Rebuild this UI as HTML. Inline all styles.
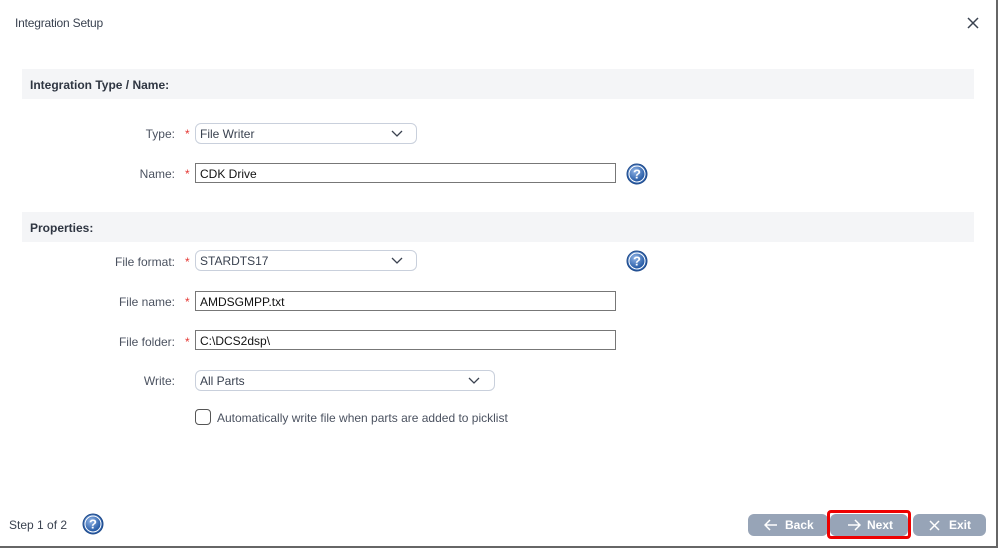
<!DOCTYPE html>
<html><head><meta charset="utf-8"><style>
*{box-sizing:border-box;margin:0;padding:0}
body{width:999px;height:549px;background:#fff;font-family:"Liberation Sans",sans-serif;color:#3a4250;position:relative;overflow:hidden;font-size:12px}
.frame{position:absolute;left:0;top:0;width:998px;height:548px;border-right:2px solid #666;border-bottom:2px solid #666}
.abs{position:absolute}
.title{left:15px;top:16px;font-size:12px;color:#3a4250;letter-spacing:-0.2px}
.sec{left:22px;width:952px;height:30px;background:#f4f5f7;font-weight:bold;font-size:12px;padding:9px 0 0 8px;color:#2f3642}
.lbl{text-align:right;width:150px;left:25px;font-size:12px;color:#4b5260}
.star{color:#e53935;font-size:12px}
.sel{border:1px solid #c9d0dc;border-radius:6px;height:21px;padding:3px 0 0 4px;font-size:12px;color:#3a4250;background:#fff}
.inp{border:1px solid #777;height:20px;padding:3px 0 0 4px;font-size:12px;color:#111;background:#fff}
.chev{position:absolute;top:6px}
.btn{top:514px;height:22px;background:#97a4b7;border-radius:6px;color:#fff;font-size:12px;font-weight:bold}
.btn span{position:absolute;top:4px}
</style></head><body>
<div class="frame"></div>
<div class="abs title">Integration Setup</div>
<svg class="abs" style="left:966px;top:16px" width="14" height="14"><path d="M2 2L12 12M12 2L2 12" stroke="#3a4250" stroke-width="1.5"/></svg>

<div class="abs sec" style="top:69px">Integration Type / Name:</div>
<div class="abs lbl" style="top:127px">Type:</div><div class="abs star" style="left:185px;top:127px">*</div>
<div class="abs sel" style="left:195px;top:123px;width:222px">File Writer<svg class="chev" style="left:195px" width="12" height="8"><path d="M1 1L6 6L11 1" stroke="#3a4250" stroke-width="1.3" fill="none"/></svg></div>
<div class="abs lbl" style="top:167px">Name:</div><div class="abs star" style="left:185px;top:167px">*</div>
<div class="abs inp" style="left:195px;top:163px;width:421px">CDK Drive</div>
<svg class="abs" style="left:626px;top:163px" width="22" height="22"><defs><radialGradient id="g" cx="40%" cy="35%"><stop offset="0" stop-color="#8fb3e6"/><stop offset="1" stop-color="#2a5ea8"/></radialGradient></defs><circle cx="11" cy="11" r="10" fill="url(#g)" stroke="#1f4a8a"/><circle cx="11" cy="11" r="8" fill="none" stroke="#fff" stroke-width="1"/><text x="11" y="15.5" text-anchor="middle" font-family="Liberation Sans" font-weight="bold" font-size="13" fill="#fff">?</text></svg>

<div class="abs sec" style="top:212px">Properties:</div>
<div class="abs lbl" style="top:255px">File format:</div><div class="abs star" style="left:185px;top:255px">*</div>
<div class="abs sel" style="left:195px;top:250px;width:222px">STARDTS17<svg class="chev" style="left:195px" width="12" height="8"><path d="M1 1L6 6L11 1" stroke="#3a4250" stroke-width="1.3" fill="none"/></svg></div>
<svg class="abs" style="left:626px;top:250px" width="22" height="22"><circle cx="11" cy="11" r="10" fill="url(#g)" stroke="#1f4a8a"/><circle cx="11" cy="11" r="8" fill="none" stroke="#fff" stroke-width="1"/><text x="11" y="15.5" text-anchor="middle" font-family="Liberation Sans" font-weight="bold" font-size="13" fill="#fff">?</text></svg>
<div class="abs lbl" style="top:295px">File name:</div><div class="abs star" style="left:185px;top:295px">*</div>
<div class="abs inp" style="left:195px;top:291px;width:421px">AMDSGMPP.txt</div>
<div class="abs lbl" style="top:335px">File folder:</div><div class="abs star" style="left:185px;top:335px">*</div>
<div class="abs inp" style="left:195px;top:330px;width:421px">C:\DCS2dsp\</div>
<div class="abs lbl" style="top:374px">Write:</div>
<div class="abs sel" style="left:195px;top:370px;width:300px">All Parts<svg class="chev" style="left:272px" width="12" height="8"><path d="M1 1L6 6L11 1" stroke="#3a4250" stroke-width="1.3" fill="none"/></svg></div>
<div class="abs" style="left:195px;top:409px;width:16px;height:16px;border:1.5px solid #555;border-radius:4px"></div>
<div class="abs" style="left:217px;top:411px;color:#4b5260">Automatically write file when parts are added to picklist</div>

<div class="abs" style="left:9px;top:518px;color:#3a4250">Step 1 of 2</div>
<svg class="abs" style="left:82px;top:513px" width="22" height="22"><circle cx="11" cy="11" r="10" fill="url(#g)" stroke="#1f4a8a"/><circle cx="11" cy="11" r="8" fill="none" stroke="#fff" stroke-width="1"/><text x="11" y="15.5" text-anchor="middle" font-family="Liberation Sans" font-weight="bold" font-size="13" fill="#fff">?</text></svg>

<div class="abs btn" style="left:748px;width:80px"><svg class="abs" style="left:16px;top:5px" width="14" height="12"><path d="M13 6H2M6 1L1 6L6 11" stroke="#fff" stroke-width="1.5" fill="none"/></svg><span style="left:37px">Back</span></div>
<div class="abs" style="left:827px;top:510px;width:84px;height:29px;border:3px solid #e00;border-radius:4px"></div>
<div class="abs btn" style="left:830px;width:78px"><svg class="abs" style="left:17px;top:5px" width="14" height="12"><path d="M1 6H12M8 1L13 6L8 11" stroke="#fff" stroke-width="1.5" fill="none"/></svg><span style="left:37px">Next</span></div>
<div class="abs btn" style="left:913px;width:73px"><svg class="abs" style="left:16px;top:6px" width="11" height="11"><path d="M1 1L10 10M10 1L1 10" stroke="#fff" stroke-width="1.5"/></svg><span style="left:36px">Exit</span></div>
</body></html>
